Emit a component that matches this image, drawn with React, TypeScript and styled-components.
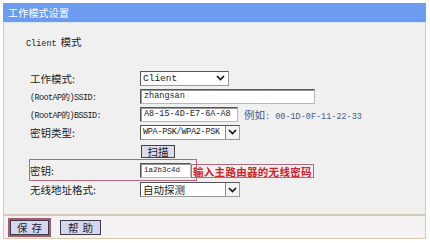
import React from 'react';
import styled, { createGlobalStyle } from 'styled-components';

const cjk = `"Noto Sans CJK SC", "Liberation Sans", sans-serif`;
const mono = `"Liberation Mono", "Noto Sans CJK SC", monospace`;

const GlobalStyle = createGlobalStyle`
  html, body {
    margin: 0;
    padding: 0;
    background: #ffffff;
  }
  body {
    width: 430px;
    height: 243px;
    overflow: hidden;
    font-family: ${cjk};
  }
`;

const Frame = styled.div`
  margin: 3px 0 0 3px;
  width: 423px;
  box-sizing: border-box;
  border: 1px solid #d9ccae;
  border-top: 0;
  background: #f0f0f0;
`;

const Header = styled.div`
  height: 19px;
  margin: 0 -1px;
  background: #6c9cef;
  border-bottom: 1px solid #dce8f7;
  color: #ffffff;
  font-family: ${cjk};
  font-size: 10px;
  line-height: 19px;
  padding-left: 5px;
  letter-spacing: 0.2px;
`;

const Content = styled.div`
  height: 193px;
  box-sizing: border-box;
  padding: 12px 0 0 22px;
  border-bottom: 2px solid #d6cbb0;
`;

const Title = styled.div`
  height: 14px;
  line-height: 14px;
  margin-bottom: 20px;
  color: #222;
  font-size: 10.5px;
  font-family: ${cjk};

  span {
    font-family: ${mono};
    font-size: 8.5px;
    margin-right: 4px;
  }
`;

const Form = styled.div`
  display: flex;
  flex-direction: column;
`;

const Row = styled.div<{ h: number }>`
  display: grid;
  grid-template-columns: 114px auto;
  align-items: center;
  height: ${p => p.h}px;
  position: relative;
`;

const Label = styled.div<{ ascii?: boolean }>`
  padding-left: 4px;
  color: #222;
  font-family: ${p => (p.ascii ? mono : cjk)};
  font-size: ${p => (p.ascii ? '8.5px' : '10.5px')};
  letter-spacing: ${p => (p.ascii ? '-0.6px' : '0')};
  white-space: nowrap;
`;

const Field = styled.div`
  display: flex;
  align-items: center;
  gap: 6px;
`;

const Input = styled.div<{ w: number; small?: boolean }>`
  width: ${p => p.w}px;
  height: 15px;
  box-sizing: border-box;
  background: #ffffff;
  border: 1px solid;
  border-color: #555 #b8b8b8 #b8b8b8 #555;
  box-shadow: inset 1px 1px 0 #999;
  padding-left: 3px;
  font-family: ${mono};
  font-size: ${p => (p.small ? '7.5px' : '8.5px')};
  line-height: 13px;
  color: #222;
  white-space: nowrap;
  overflow: hidden;
`;

const Select = styled.div<{ w: number; cjkText?: boolean }>`
  width: ${p => p.w}px;
  height: 15px;
  box-sizing: border-box;
  display: flex;
  align-items: center;
  justify-content: space-between;
  background: #ffffff;
  border: 1px solid;
  border-color: #555 #9a9a9a #9a9a9a #555;
  padding-left: 2px;
  font-family: ${p => (p.cjkText ? cjk : mono)};
  font-size: ${p => (p.cjkText ? '10.5px' : '8.5px')};
  color: #222;
  white-space: nowrap;
  overflow: hidden;
`;

const Arrow = styled.div<{ boxed?: boolean }>`
  flex: none;
  width: ${p => (p.boxed ? 14 : 16)}px;
  height: 100%;
  display: flex;
  align-items: center;
  justify-content: center;
  box-sizing: border-box;
  border-left: ${p => (p.boxed ? '1px solid #888' : '0')};
  background: ${p => (p.boxed ? '#f4f4f4' : 'transparent')};
`;

const Example = styled.span`
  color: #4a5a8a;
  font-size: 8.5px;
  font-family: ${mono};

  b {
    font-family: ${cjk};
    font-weight: normal;
    font-size: 10.5px;
    color: #445588;
  }
`;

const ScanButton = styled.div`
  width: 34px;
  height: 13px;
  box-sizing: border-box;
  margin-left: 1px;
  border: 1px solid #444;
  background: #dcdcec;
  font-family: ${cjk};
  font-size: 10.5px;
  line-height: 11px;
  text-align: center;
  color: #222;
`;

const Highlight = styled.div`
  position: absolute;
  left: 3px;
  top: -2px;
  width: 168px;
  height: 22px;
  box-sizing: border-box;
  border: 1.5px solid #b8677e;
  pointer-events: none;
`;

const Hint = styled.span`
  margin-left: -6px;
  padding: 0 1px;
  height: 14px;
  line-height: 13px;
  box-sizing: border-box;
  border: 1px solid #b26a80;
  color: #d2232a;
  font-family: ${cjk};
  font-size: 10.5px;
  font-weight: bold;
  letter-spacing: 0.3px;
`;

const BottomBar = styled.div`
  height: 22px;
  display: flex;
  align-items: center;
  gap: 9px;
  padding-left: 4px;
  background: #f4f2f2;
`;

const Button = styled.div<{ active?: boolean }>`
  width: ${p => (p.active ? 43 : 41)}px;
  height: ${p => (p.active ? 19 : 15)}px;
  box-sizing: border-box;
  border: ${p => (p.active ? '2px solid #a65a74' : '0')};
  display: flex;
  align-items: center;
  justify-content: center;

  span {
    display: block;
    width: ${p => (p.active ? 39 : 41)}px;
    height: 15px;
    box-sizing: border-box;
    border: 1px solid #3a3a4a;
    background: #d6d6ee;
    font-family: ${cjk};
    font-size: 10.5px;
    line-height: 13px;
    text-align: center;
    white-space: nowrap;
    letter-spacing: 4px;
    text-indent: 4px;
    color: #223;
  }
`;

const Chevron = () => (
  <svg width="9" height="6" viewBox="0 0 9 6">
    <path d="M1 1 L4.5 4.5 L8 1" fill="none" stroke="#111" strokeWidth="1.6" />
  </svg>
);

export default function App() {
  return (
    <>
      <GlobalStyle />
      <Frame>
        <Header>工作模式设置</Header>
        <Content>
          <Title>
            <span>Client</span>模式
          </Title>
          <Form>
            <Row h={18}>
              <Label>工作模式:</Label>
              <Field>
                <Select w={89}>
                  <span style={{ fontSize: '9.5px' }}>Client</span>
                  <Arrow>
                    <Chevron />
                  </Arrow>
                </Select>
              </Field>
            </Row>
            <Row h={18}>
              <Label ascii>(RootAP的)SSID:</Label>
              <Field>
                <Input w={175}>zhangsan</Input>
              </Field>
            </Row>
            <Row h={18}>
              <Label ascii>(RootAP的)BSSID:</Label>
              <Field>
                <Input w={98}>A8-15-4D-E7-6A-A8</Input>
                <Example>
                  <b>例如</b>: 00-1D-0F-11-22-33
                </Example>
              </Field>
            </Row>
            <Row h={18}>
              <Label>密钥类型:</Label>
              <Field>
                <Select w={100}>
                  <span style={{ letterSpacing: '-0.3px' }}>WPA-PSK/WPA2-PSK</span>
                  <Arrow boxed>
                    <Chevron />
                  </Arrow>
                </Select>
              </Field>
            </Row>
            <Row h={20}>
              <span />
              <Field>
                <ScanButton>扫描</ScanButton>
              </Field>
            </Row>
            <Row h={19}>
              <Highlight />
              <Label>密钥:</Label>
              <Field>
                <Input w={51} small>1a2b3c4d</Input>
                <Hint>输入主路由器的无线密码</Hint>
              </Field>
            </Row>
            <Row h={19}>
              <Label>无线地址格式:</Label>
              <Field>
                <Select w={100} cjkText>
                  <span>自动探测</span>
                  <Arrow boxed>
                    <Chevron />
                  </Arrow>
                </Select>
              </Field>
            </Row>
          </Form>
        </Content>
        <BottomBar>
          <Button active>
            <span>保存</span>
          </Button>
          <Button>
            <span>帮助</span>
          </Button>
        </BottomBar>
      </Frame>
    </>
  );
}
